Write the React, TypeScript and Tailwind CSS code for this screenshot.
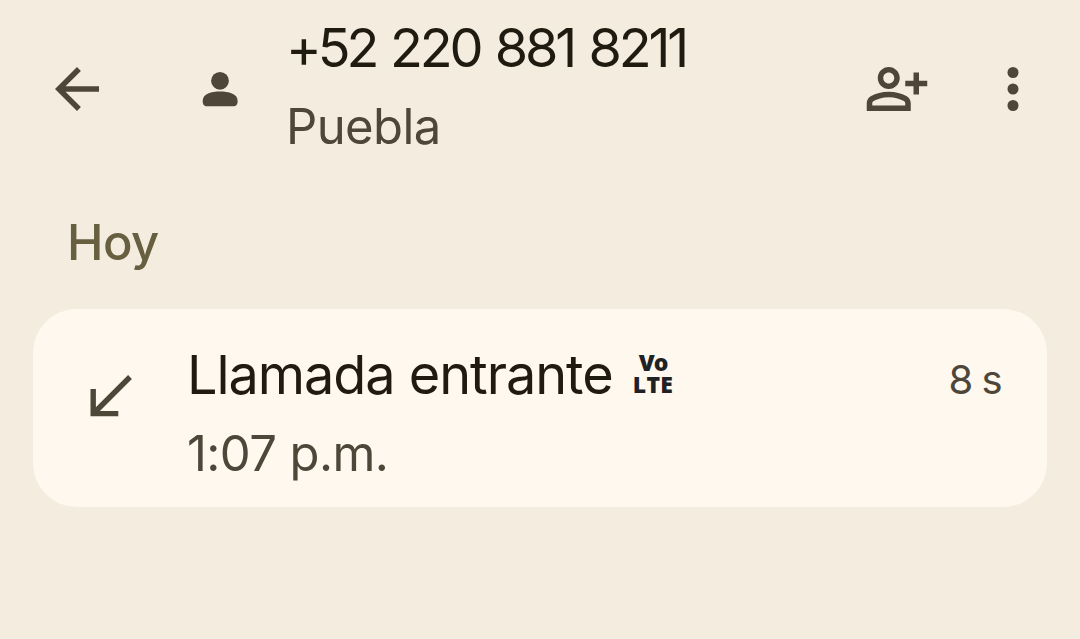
import { ReactNode } from "react";

type IconProps = {
    className?: string;
    children: ReactNode;
};

const Icon = ({ className = "size-[66px]", children }: IconProps) => (
    <svg
        viewBox="0 0 24 24"
        className={`shrink-0 fill-current ${className}`}
        aria-hidden="true">
        {children}
    </svg>
);

const VolteBadge = () => (
    <span className="flex w-[42px] flex-col items-center font-['Open_Sans',sans-serif] text-[23px] leading-[22px] font-extrabold text-[#1f2225]">
        <span className="tracking-[-1px]">Vo</span>
        <span className="tracking-[0.3px]">LTE</span>
    </span>
);

const Header = () => (
    <header className="flex h-[178px] items-center text-[#4d4639]">
        <button aria-label="Atrás" className="ml-11">
            <Icon>
                <path d="M20 11H7.83l5.59-5.59L12 4l-8 8 8 8 1.41-1.41L7.83 13H20v-2z" />
            </Icon>
        </button>

        <svg
            viewBox="0 0 36 36"
            className="ml-[92px] size-9 shrink-0 fill-current"
            aria-hidden="true">
            <circle cx="18" cy="9.8" r="8.9" />
            <path d="M.7 29.9C.7 22.500 9.500 20.500 18 20.500s17.600 2 17.600 9.400c0 3.600-1.200 5.300-4.600 5.300H5.300C1.900 35.200.7 33.500.7 29.900z" />
        </svg>

        <div className="ml-[48px] h-[178px] grow pt-[15px] whitespace-nowrap">
            <h1 className="h-[79px] text-[54px] leading-[66px] tracking-[-3.2px] text-[#1f1b10] [word-spacing:2.5px]">
                <span className="tracking-[-4px]">+52</span> 220 881 8211
            </h1>
            <p className="text-[49px] leading-[66px] tracking-[-0.6px]">
                Puebla
            </p>
        </div>

        <button aria-label="Agregar contacto">
            <Icon>
                <path d="M20 9V6h-2v3h-3v2h3v3h2v-3h3V9h-3zM9 12c2.210 0 4-1.790 4-4s-1.790-4-4-4-4 1.790-4 4 1.790 4 4 4zm0-6c1.100 0 2 .9 2 2s-.9 2-2 2-2-.9-2-2 .9-2 2-2zM15.390 14.560C13.710 13.700 11.530 13 9 13s-4.710.7-6.390 1.560C1.610 15.070 1 16.100 1 17.220V20h16v-2.780c0-1.120-.61-2.150-1.610-2.660zM15 18H3v-.78c0-.38.2-.72.520-.88C4.710 15.730 6.630 15 9 15s4.290.73 5.480 1.340c.32.160.520.500.520.880V18z" />
            </Icon>
        </button>
        <button aria-label="Más opciones" className="ml-[50px] mr-[34px]">
            <Icon>
                <circle cx="12" cy="6" r="2" />
                <circle cx="12" cy="12" r="2" />
                <circle cx="12" cy="18" r="2" />
            </Icon>
        </button>
    </header>
);

const CallCard = () => (
    <li className="mx-[33px] flex h-[198px] rounded-[44px] bg-[#fff8ee] text-[#4d4639]">
        <svg
            viewBox="0 0 42 42"
            className="mt-[66px] ml-[57px] size-[42px] shrink-0 fill-none stroke-current stroke-[5.4]"
            aria-hidden="true">
            <path d="M40 2 4 38M3.200 14v24.600H28.300" />
        </svg>

        <div className="ml-[55px] grow whitespace-nowrap">
            <div className="flex h-[78px] pt-[33px]">
                <h3 className="w-[445px] text-[54px] leading-[66px] tracking-[-1.05px] text-[#1f1b10]">
                    Llamada entrante
                </h3>
                <div className="pt-[9px]">
                    <VolteBadge />
                </div>
            </div>
            <p className="pt-[34px] text-[49px] leading-[66px] tracking-[-0.6px]">
                1:07 p.m.
            </p>
        </div>

        <span className="mt-[46px] mr-[46px] text-[40px] leading-[50px] tracking-[-1.5px]">
            8 s
        </span>
    </li>
);

export default function App() {
    return (
        <main className="h-[639px] overflow-hidden bg-[#f4ecdf] font-[Inter,sans-serif]">
            <Header />
            <h2 className="h-[131px] pt-[32px] pl-[67px] text-[49px] leading-[66px] font-medium tracking-[-0.6px] text-[#685f40]">
                Hoy
            </h2>
            <ul>
                <CallCard />
            </ul>
        </main>
    );
}
